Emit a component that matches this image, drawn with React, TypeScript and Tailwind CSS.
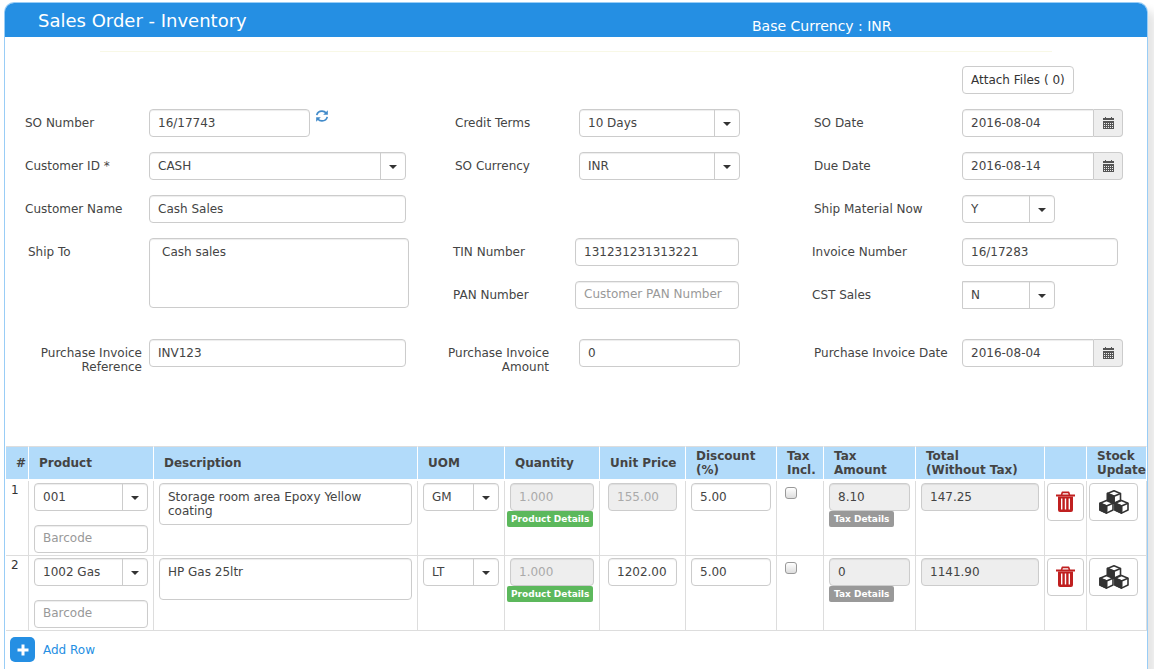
import React, { useId, useState } from "react";
import clsx from "clsx";

type Row = {
  product: string;
  description: string;
  uom: string;
  quantity: string;
  price: string;
  priceLocked: boolean;
  discount: string;
  tax: string;
  total: string;
};

const initialRows: Row[] = [
  {
    product: "001",
    description: "Storage room area Epoxy Yellow coating",
    uom: "GM",
    quantity: "1.000",
    price: "155.00",
    priceLocked: true,
    discount: "5.00",
    tax: "8.10",
    total: "147.25",
  },
  {
    product: "1002 Gas",
    description: "HP Gas 25ltr",
    uom: "LT",
    quantity: "1.000",
    price: "1202.00",
    priceLocked: false,
    discount: "5.00",
    tax: "0",
    total: "1141.90",
  },
];

const emptyRow: Row = {
  product: "",
  description: "",
  uom: "",
  quantity: "",
  price: "",
  priceLocked: false,
  discount: "",
  tax: "0",
  total: "0",
};

// description takes whatever width is left
const columns = [
  { title: "#", width: "w-[23px]" },
  { title: "Product", width: "w-[125px]" },
  { title: "Description", width: "" },
  { title: "UOM", width: "w-[87px]" },
  { title: "Quantity", width: "w-[95px]" },
  { title: "Unit Price", width: "w-[86px]" },
  { title: "Discount\n(%)", width: "w-[91px]" },
  { title: "Tax\nIncl.", width: "w-[47px]" },
  { title: "Tax\nAmount", width: "w-[92px]" },
  { title: "Total\n(Without Tax)", width: "w-[129px]" },
  { title: "", width: "w-[42px]" },
  { title: "Stock\nUpdate", width: "w-[60px]" },
];

const box =
  "block w-full min-w-0 rounded border border-[#ccc] px-2 text-[#444] shadow-[inset_0_1px_1px_rgba(0,0,0,0.075)] placeholder:text-[#999] placeholder-shown:pb-0.5 focus:outline-none focus:border-[#258fe3]";

const cell = "border-r border-b border-[#ddd] px-[5px] pt-0.5 align-top";

const RefreshIcon = () => (
  <svg viewBox="0 0 24 24" className="size-3.5" fill="none" stroke="#428bca" strokeWidth="2.8">
    <path d="M3 10.5C4 6 7.600 3.600 12 3.600c3 0 5.400 1.200 7.200 3.400" />
    <path d="M21 13.500c-1 4.500-4.600 6.900-9 6.900-3 0-5.400-1.200-7.200-3.400" />
    <path d="M22 2v8h-8zM2 22v-8h8z" fill="#428bca" stroke="none" />
  </svg>
);

const CalendarIcon = () => (
  <svg viewBox="0 0 11 12" className="h-3 w-[11px]" shapeRendering="crispEdges">
    <path d="M2 0h1v1h5V0h1v1h2v2H0V1h2z" fill="#555" />
    <path d="M0 4h11v8H0z" fill="#555" />
    <path
      d="M1 6h1v1H1zM3 6h1v1H3zM5 6h1v1H5zM7 6h1v1H7zM9 6h1v1H9zM1 8h1v1H1zM3 8h1v1H3zM5 8h1v1H5zM7 8h1v1H7zM9 8h1v1H9zM1 10h1v1H1zM3 10h1v1H3zM5 10h1v1H5zM7 10h1v1H7zM9 10h1v1H9z"
      fill="#eee"
    />
  </svg>
);

const TrashIcon = () => (
  <svg viewBox="0 0 19 22" className="h-[22px] w-[19px]">
    <path d="M5.500 4l.8-2.600h6.400l.8 2.600" fill="none" stroke="#c02020" strokeWidth="1.600" strokeLinejoin="round" />
    <path d="M0 3.500h19v2H0z" fill="#c02020" />
    <path
      d="M2 5.500h15v13.500a2 2 0 0 1-2 2H4a2 2 0 0 1-2-2zM5 7.500v11h1.400v-11zM8.800 7.500v11h1.400v-11zM12.600 7.500v11H14v-11z"
      fill="#c02020"
      fillRule="evenodd"
    />
  </svg>
);

const Cube = ({ x, y }: { x: number; y: number }) => (
  <g transform={`translate(${x} ${y})`} stroke="#333" strokeWidth="1.600" strokeLinejoin="round">
    <path d="M7.500 1l6.500 2.600v6.800L7.500 13.500 1 10.400V3.600z" fill="#fff" />
    <path d="M1 3.600l6.500 2.800v7.100L1 10.400z" fill="#333" />
    <path d="M1 3.600l6.500 2.800L14 3.600M7.500 6.400v7" fill="none" />
  </g>
);

const CubesIcon = () => (
  <svg viewBox="0 0 30 24" className="h-6 w-[30px]">
    <Cube x={7.5} y={-0.2} />
    <Cube x={0} y={9.6} />
    <Cube x={15} y={9.6} />
  </svg>
);

type SelectProps = React.SelectHTMLAttributes<HTMLSelectElement> & {
  value: string;
  square?: boolean;
};

const Select = ({ value, square, ...rest }: SelectProps) => (
  <div className="relative w-full">
    <select
      defaultValue={value}
      className={clsx(box, "h-7 appearance-none bg-white pr-7", square && "rounded-l-none")}
      {...rest}
    >
      <option>{value}</option>
    </select>
    <span className="pointer-events-none absolute inset-y-0 right-0 flex w-[26px] items-center justify-center border-l border-[#ccc] pt-0.5 pr-0.5">
      <svg viewBox="0 0 8 4" className="h-1 w-2" fill="#333">
        <path d="M0 0h8L4 4z" />
      </svg>
    </span>
  </div>
);

const DateInput = ({ id, value }: { id: string; value: string }) => (
  <div className="flex w-full">
    <input id={id} defaultValue={value} className={clsx(box, "h-7 rounded-r-none")} />
    <button
      type="button"
      aria-label="Pick a date"
      className="flex h-7 w-[29px] shrink-0 items-center justify-center rounded-r border border-l-0 border-[#ccc] bg-[#eee]"
    >
      <CalendarIcon />
    </button>
  </div>
);

type FieldProps = {
  label: string;
  labelClass: string;
  width: string;
  className?: string;
  after?: React.ReactNode;
  children: (id: string) => React.ReactNode;
};

const Field = ({ label, labelClass, width, className, after, children }: FieldProps) => {
  const id = useId();
  return (
    <div className={clsx("flex min-w-0 items-start", className)}>
      <label htmlFor={id} className={clsx("shrink-0 pt-[7px] whitespace-pre", labelClass)}>
        {label}
      </label>
      <div className={clsx("w-full", width)}>{children(id)}</div>
      {after}
    </div>
  );
};

const OrderForm = () => (
  <form className="text-[#444]">
    <div className="grid grid-cols-[430fr_359fr_333fr] gap-y-[15px] pl-5">
      <div className="col-start-3 pl-[148px]">
        <button
          type="button"
          className="h-7 rounded border border-[#ccc] bg-white px-2 whitespace-nowrap text-[#333]"
        >
          Attach Files ( 0)
        </button>
      </div>

      <Field
        label="SO Number"
        labelClass="w-[124px]"
        width="max-w-[161px]"
        className="col-start-1"
        after={
          <button type="button" aria-label="Refresh number" className="ml-[5px]">
            <RefreshIcon />
          </button>
        }
      >
        {(id) => <input id={id} defaultValue="16/17743" className={clsx(box, "h-7")} />}
      </Field>
      <Field label="Credit Terms" labelClass="w-[124px]" width="max-w-[161px]">
        {(id) => <Select id={id} value="10 Days" />}
      </Field>
      <Field label="SO Date" labelClass="w-[148px]" width="max-w-[161px]">
        {(id) => <DateInput id={id} value="2016-08-04" />}
      </Field>

      <Field label="Customer ID *" labelClass="w-[124px]" width="max-w-[257px]">
        {(id) => <Select id={id} value="CASH" />}
      </Field>
      <Field label="SO Currency" labelClass="w-[124px]" width="max-w-[161px]">
        {(id) => <Select id={id} value="INR" />}
      </Field>
      <Field label="Due Date" labelClass="w-[148px]" width="max-w-[161px]">
        {(id) => <DateInput id={id} value="2016-08-14" />}
      </Field>

      <Field label="Customer Name" labelClass="w-[124px]" width="max-w-[257px]">
        {(id) => <input id={id} defaultValue="Cash Sales" className={clsx(box, "h-7")} />}
      </Field>
      <Field
        label="Ship Material Now"
        labelClass="w-[148px]"
        width="max-w-[93px]"
        className="col-start-3"
      >
        {(id) => <Select id={id} value="Y" />}
      </Field>
    </div>

    {/* Addresses and tax numbers */}
    <div className="mt-[15px] grid grid-cols-[425fr_359fr_335fr] gap-y-[15px] pl-[23px]">
      <Field
        label="Ship To"
        labelClass="w-[121px]"
        width="max-w-[260px]"
        className="row-span-2"
      >
        {(id) => (
          <textarea
            id={id}
            defaultValue="Cash sales"
            className={clsx(box, "h-[70px] resize-none px-3 py-1.5")}
          />
        )}
      </Field>
      <Field label="TIN Number" labelClass="w-[122px]" width="max-w-[164px]">
        {(id) => <input id={id} defaultValue="131231231313221" className={clsx(box, "h-7")} />}
      </Field>
      <Field label="Invoice Number" labelClass="w-[150px]" width="max-w-[156px]">
        {(id) => <input id={id} defaultValue="16/17283" className={clsx(box, "h-7")} />}
      </Field>
      <Field label="PAN Number" labelClass="w-[122px]" width="max-w-[164px]">
        {(id) => <input id={id} placeholder="Customer PAN Number" className={clsx(box, "h-7")} />}
      </Field>
      <Field label="CST Sales" labelClass="w-[150px]" width="max-w-[93px]">
        {(id) => <Select id={id} value="N" square />}
      </Field>
    </div>

    {/* Purchase invoice */}
    <div className="mt-[30px] grid grid-cols-[423fr_366fr_333fr] pl-5">
      <Field
        label={"Purchase Invoice\nReference"}
        labelClass="w-[124px] pr-[7px] text-right"
        width="max-w-[257px]"
      >
        {(id) => <input id={id} defaultValue="INV123" className={clsx(box, "h-7")} />}
      </Field>
      <Field
        label={"Purchase Invoice\nAmount"}
        labelClass="w-[131px] pr-[30px] text-right"
        width="max-w-[161px]"
      >
        {(id) => <input id={id} defaultValue="0" className={clsx(box, "h-7")} />}
      </Field>
      <Field label="Purchase Invoice Date" labelClass="w-[148px]" width="max-w-[161px]">
        {(id) => <DateInput id={id} value="2016-08-04" />}
      </Field>
    </div>
  </form>
);

const ItemRow = ({ row, index, onRemove }: { row: Row; index: number; onRemove: () => void }) => (
  <tr className="h-[75px]">
    <td className={cell}>{index + 1}</td>
    <td className={cell}>
      <Select aria-label="Product" value={row.product} />
      <input aria-label="Barcode" placeholder="Barcode" className={clsx(box, "mt-3.5 h-7")} />
    </td>
    <td className={cell}>
      <textarea
        aria-label="Description"
        defaultValue={row.description}
        className={clsx(box, "h-[42px] resize-none overflow-hidden py-1.5 pr-6")}
      />
    </td>
    <td className={cell}>
      <Select aria-label="Unit of measure" value={row.uom} />
    </td>
    <td className="border-r border-b border-[#ddd] px-0.5 pt-0.5 align-top">
      <div className="px-[3px]">
        <input
          aria-label="Quantity"
          disabled
          defaultValue={row.quantity}
          className={clsx(box, "h-7 bg-[#eee] text-[#aaa]")}
        />
      </div>
      <button
        type="button"
        className="block h-4 rounded-xs bg-[#5cb85c] px-1 text-[9px] font-bold whitespace-nowrap text-white"
      >
        Product Details
      </button>
    </td>
    <td className="border-r border-b border-[#ddd] px-2 pt-0.5 align-top">
      <input
        aria-label="Unit price"
        disabled={row.priceLocked}
        defaultValue={row.price}
        className={clsx(box, "h-7", row.priceLocked && "bg-[#eee] text-[#aaa]")}
      />
    </td>
    <td className={cell}>
      <input aria-label="Discount" defaultValue={row.discount} className={clsx(box, "h-7")} />
    </td>
    <td className="border-r border-b border-[#ddd] px-2 pt-1.5 align-top">
      <input
        type="checkbox"
        aria-label="Tax included"
        className="block size-3 appearance-none rounded-[3px] border border-[#999] bg-linear-to-b from-white to-[#ddd] checked:bg-[#258fe3] checked:bg-none"
      />
    </td>
    <td className={cell}>
      <input
        aria-label="Tax amount"
        readOnly
        defaultValue={row.tax}
        className={clsx(box, "h-7 bg-[#eee]")}
      />
      <button
        type="button"
        className="block h-4 rounded-xs bg-[#999] px-[5px] text-[9px] font-bold whitespace-nowrap text-white"
      >
        Tax Details
      </button>
    </td>
    <td className={cell}>
      <input
        aria-label="Total without tax"
        readOnly
        defaultValue={row.total}
        className={clsx(box, "h-7 bg-[#eee]")}
      />
    </td>
    <td className="border-r border-b border-[#ddd] px-0.5 pt-0.5 align-top">
      <button
        type="button"
        aria-label="Delete row"
        onClick={onRemove}
        className="flex h-[38px] w-[37px] items-center justify-center rounded border border-[#ccc] bg-white"
      >
        <TrashIcon />
      </button>
    </td>
    <td className="border-r border-b border-[#ddd] px-0.5 pt-0.5 align-top">
      <button
        type="button"
        aria-label="Update stock"
        className="flex h-[38px] w-[49px] items-center justify-center rounded border border-[#ccc] bg-white"
      >
        <CubesIcon />
      </button>
    </td>
  </tr>
);

const App = () => {
  const [rows, setRows] = useState(initialRows.map((row, i) => ({ ...row, key: i })));
  const [nextKey, setNextKey] = useState(initialRows.length);

  const addRow = () => {
    setRows([...rows, { ...emptyRow, key: nextKey }]);
    setNextKey(nextKey + 1);
  };

  return (
    <div className="flex min-h-screen flex-col overflow-x-hidden bg-white pt-0.5 pr-1.5 pl-1 font-['Verdana','DejaVu_Sans',sans-serif] text-xs/[14px] text-[#333]">
      <main className="grow rounded-t-[10px] border border-b-0 border-[#99cdf6] bg-white shadow-[8px_8px_8px_#e6e6e6]">
        <header className="grid h-[34px] grid-cols-[714fr_395fr] rounded-t-[9px] bg-[#258fe3] pl-[33px] text-white">
          <h1 className="self-end text-lg/8">Sales Order - Inventory</h1>
          <p className="self-end text-sm/[22px]">Base Currency : INR</p>
        </header>

        <hr className="mx-[95px] my-3.5 border-[#f8f8e6]" />

        <OrderForm />

        <table className="mt-[72px] ml-px w-[calc(100%-1px)] table-fixed border-separate border-spacing-0">
          <thead>
            <tr className="h-[35px]">
              {columns.map((col, i) => (
                <th
                  key={i}
                  className={clsx(
                    "border-t border-r border-b-2 border-t-[#ddd] border-r-white border-b-white bg-[#b2dbfa] pl-2.5 text-left whitespace-pre text-[#444]",
                    col.width
                  )}
                >
                  {col.title}
                </th>
              ))}
            </tr>
          </thead>
          <tbody>
            {rows.map((row, i) => (
              <ItemRow
                key={row.key}
                row={row}
                index={i}
                onRemove={() => setRows(rows.filter((r) => r.key !== row.key))}
              />
            ))}
          </tbody>
        </table>

        <button
          type="button"
          onClick={addRow}
          className="mt-1.5 ml-[5px] flex items-center gap-2 text-[#258fe3]"
        >
          <span className="flex size-[25px] items-center justify-center rounded-[5px] bg-[#258fe3]">
            <svg viewBox="0 0 12 12" className="size-3" fill="#fff">
              <path d="M4.500 0.500h3v4h4v3h-4v4h-3v-4h-4v-3h4z" />
            </svg>
          </span>
          Add Row
        </button>
      </main>
    </div>
  );
};

export default App;
